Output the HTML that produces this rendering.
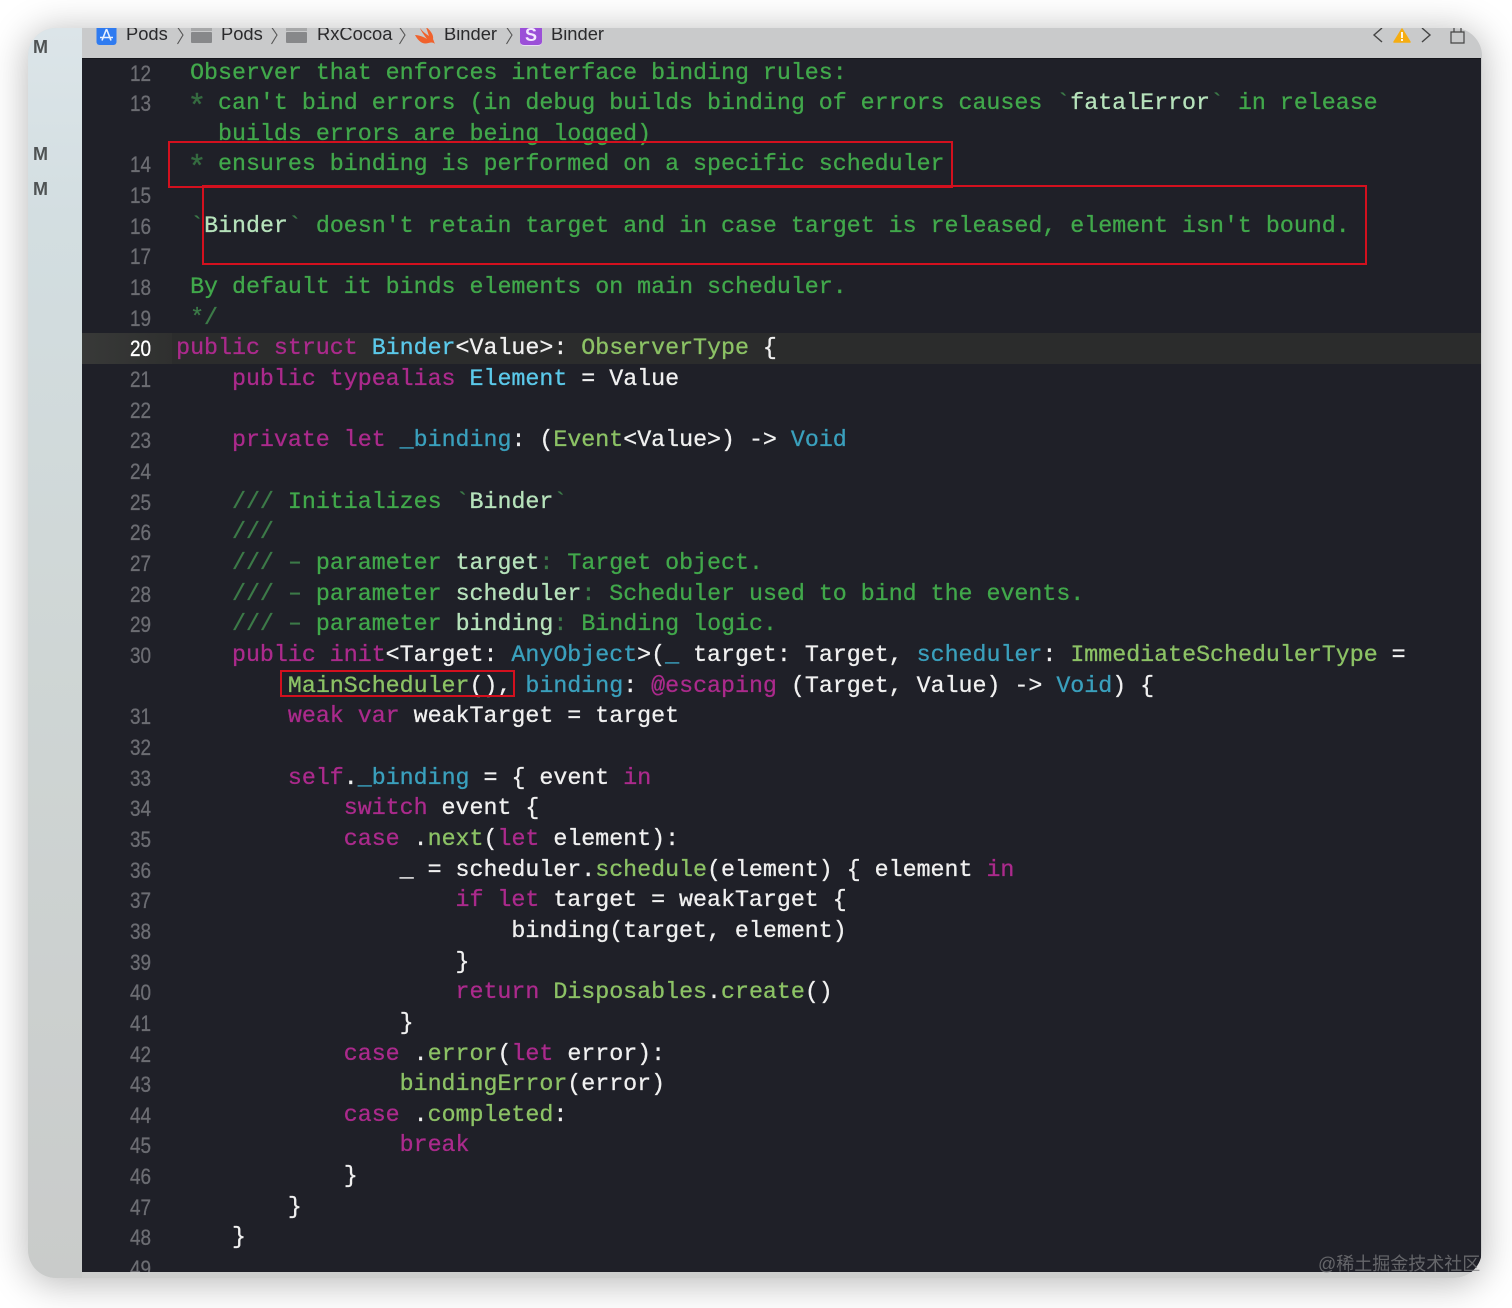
<!DOCTYPE html>
<html><head><meta charset="utf-8"><style>
html,body{margin:0;padding:0;background:#fff;width:1512px;height:1308px;overflow:hidden}
#win{position:absolute;left:28px;top:28px;width:1454px;height:1250px;border-radius:28px;overflow:hidden;background:#cdcecd}
#shadow{position:absolute;left:28px;top:28px;width:1454px;height:1250px;border-radius:28px;box-shadow:0 4px 36px 2px rgba(0,0,0,.27)}
#side{position:absolute;left:0;top:0;width:54px;height:1250px;background:linear-gradient(180deg,#dce5e9 0,#d3dee1 15%,#cfd6d5 50%,#c9cbca 100%)}
#top{position:absolute;left:54px;top:0;width:1400px;height:30px;background:#c9cacb}
#ed{position:absolute;left:54px;top:30px;width:1399px;height:1214px;background:#1f2028;overflow:hidden;border-top:1px solid #15161b;box-sizing:border-box}
#hl{position:absolute;left:0;top:274px;width:1399px;height:31px;background:#2b2c2c}
#hg{position:absolute;left:0;top:274px;width:90px;height:31px;background:linear-gradient(90deg,#383938,#2f302f)}
pre{margin:0;position:absolute;font-family:"Liberation Mono",monospace;font-size:23.29px;line-height:30.66px;color:#f0f0f0;-webkit-text-stroke:.3px currentColor}
#code{left:94.1px;top:-1.5px}
#nums{left:0;top:-.5px;width:69px;text-align:right;font-family:"Liberation Sans",sans-serif;font-size:22px;color:#6c6d73;transform:scaleX(.86);transform-origin:100% 0}
#nums b{font-weight:400;color:#fff}
.g{color:#41a84b}.d{color:#3c7a48}.m{color:#b6e2bb}.k{color:#ab2a8c}.t{color:#5bc9ea}.b{color:#3aa0bd}.n{color:#8cc265}
.s{display:inline-block;width:13.98px;text-align:center;color:#356b40;-webkit-text-stroke:.3px #356b40;transform:translateY(5px) scale(1.35)}
.h{display:inline-block;color:#3c7a48;transform:scaleX(1.5)}
.box{position:absolute;border:2px solid #d3101e;box-sizing:border-box}
.M{position:absolute;font:700 18px "Liberation Sans",sans-serif;color:#4f5354;line-height:20px}
.c{position:absolute;top:24px;font:18.35px/20px "Liberation Sans",sans-serif;color:#2a2a2c}
svg{position:absolute;overflow:visible}
#wm{position:absolute;left:1318px;top:1252px;font:18px/24px "Liberation Sans","Noto Sans CJK SC",sans-serif;color:rgba(125,125,128,.75);white-space:nowrap}
</style></head><body>
<div id="shadow"></div>
<div id="win">
<div id="side"></div>
<div id="top"></div>
<div id="ed">
<div id="hl"></div><div id="hg"></div>
<pre id="nums">12
13

14
15
16
17
18
19
<b>20</b>
21
22
23
24
25
26
27
28
29
30

31
32
33
34
35
36
37
38
39
40
41
42
43
44
45
46
47
48
49</pre>
<pre id="code"> <span class="g">Observer that enforces interface binding rules:</span>
 <span class="s">*</span><span class="g"> can't bind errors (in debug builds binding of errors causes </span><span class="d">`</span><span class="m">fatalError</span><span class="d">`</span><span class="g"> in release</span>
   <span class="g">builds errors are being logged)</span>
 <span class="s">*</span><span class="g"> ensures binding is performed on a specific scheduler</span>

 <span class="d">`</span><span class="m">Binder</span><span class="d">`</span><span class="g"> doesn't retain target and in case target is released, element isn't bound.</span>

 <span class="g">By default it binds elements on main scheduler.</span>
 <span class="d">*/</span>
<span class="k">public struct</span> <span class="t">Binder</span>&lt;Value&gt;: <span class="n">ObserverType</span> {
    <span class="k">public typealias</span> <span class="t">Element</span> = Value

    <span class="k">private let</span> <span class="b">_binding</span>: (<span class="n">Event</span>&lt;Value&gt;) -&gt; <span class="b">Void</span>

    <span class="d">///</span> <span class="g">Initializes </span><span class="d">`</span><span class="m">Binder</span><span class="d">`</span>
    <span class="d">///</span>
    <span class="d">/// </span><span class="h">-</span> <span class="g">parameter </span><span class="m">target</span><span class="d">:</span><span class="g"> Target object.</span>
    <span class="d">/// </span><span class="h">-</span> <span class="g">parameter </span><span class="m">scheduler</span><span class="d">:</span><span class="g"> Scheduler used to bind the events.</span>
    <span class="d">/// </span><span class="h">-</span> <span class="g">parameter </span><span class="m">binding</span><span class="d">:</span><span class="g"> Binding logic.</span>
    <span class="k">public init</span>&lt;Target: <span class="b">AnyObject</span>&gt;(<span class="b">_</span> target: Target, <span class="b">scheduler</span>: <span class="n">ImmediateSchedulerType</span> =
        <span class="n">MainScheduler</span>(), <span class="b">binding</span>: <span class="k">@escaping</span> (Target, Value) -&gt; <span class="b">Void</span>) {
        <span class="k">weak var</span> weakTarget = target

        <span class="k">self</span>.<span class="b">_binding</span> = { event <span class="k">in</span>
            <span class="k">switch</span> event {
            <span class="k">case</span> .<span class="n">next</span>(<span class="k">let</span> element):
                _ = scheduler.<span class="n">schedule</span>(element) { element <span class="k">in</span>
                    <span class="k">if let</span> target = weakTarget {
                        binding(target, element)
                    }
                    <span class="k">return</span> <span class="n">Disposables</span>.<span class="n">create</span>()
                }
            <span class="k">case</span> .<span class="n">error</span>(<span class="k">let</span> error):
                <span class="n">bindingError</span>(error)
            <span class="k">case</span> .<span class="n">completed</span>:
                <span class="k">break</span>
            }
        }
    }</pre>
</div>
<div class="M" style="left:5px;top:9px">M</div>
<div class="M" style="left:5px;top:116px">M</div>
<div class="M" style="left:5px;top:151px">M</div>
</div>

<div style="position:absolute;left:0;top:28px;width:1512px;height:30px;overflow:hidden">
<div style="position:relative;top:-28px;height:58px">
<svg style="left:96px;top:25px" width="21" height="20" viewBox="0 0 21 20"><rect x=".5" y="0" width="20" height="20" rx="3" fill="#2f7bf0"/><path d="M10.5 4L6 15.5M10.5 4L15 15.5M4 12.5H17" stroke="#e8f1ff" stroke-width="1.6" fill="none"/></svg>
<div class="c" style="left:126px">Pods</div>
<svg style="left:176px;top:27px" width="10" height="18" viewBox="0 0 10 18"><path d="M1.5 0L7 8 1.5 17" stroke="#555" stroke-width="1.1" fill="none"/></svg>
<svg style="left:191px;top:28px" width="21" height="15" viewBox="0 0 21 15"><rect x="0" y="0" width="21" height="3" fill="#a7a8a9"/><rect x="0" y="4" width="21" height="11" rx="1" fill="#87888a"/></svg>
<div class="c" style="left:221px">Pods</div>
<svg style="left:270px;top:27px" width="10" height="18" viewBox="0 0 10 18"><path d="M1.5 0L7 8 1.5 17" stroke="#555" stroke-width="1.1" fill="none"/></svg>
<svg style="left:286px;top:28px" width="21" height="15" viewBox="0 0 21 15"><rect x="0" y="0" width="21" height="3" fill="#a7a8a9"/><rect x="0" y="4" width="21" height="11" rx="1" fill="#87888a"/></svg>
<div class="c" style="left:317px">RxCocoa</div>
<svg style="left:398px;top:27px" width="10" height="18" viewBox="0 0 10 18"><path d="M1.5 0L7 8 1.5 17" stroke="#555" stroke-width="1.1" fill="none"/></svg>
<svg style="left:415px;top:27px" width="20" height="18" viewBox="0 0 20 18"><path d="M0 8C4 8 9 10 12 12 9 8 6 4 5 1 8 5 11 7 14 9 13 6 12 3 11 0 15 3 19 8 18 12 19 14 19 15 20 17 17 14 14 16.500 10 16.500 6 16.500 2 12 0 8Z" fill="#f0622d"/></svg>
<div class="c" style="left:444px">Binder</div>
<svg style="left:505px;top:27px" width="10" height="18" viewBox="0 0 10 18"><path d="M1.5 0L7 8 1.5 17" stroke="#555" stroke-width="1.1" fill="none"/></svg>
<div style="position:absolute;left:520px;top:25px;width:22px;height:21px;border-radius:4px;background:#9b4fd8;border-bottom:1px solid #e9dcf5;box-sizing:border-box;color:#f3e8ff;font:700 18px/20px 'Liberation Sans',sans-serif;text-align:center">S</div>
<div class="c" style="left:551px">Binder</div>
<svg style="left:1372px;top:27px" width="12" height="18" viewBox="0 0 12 18"><path d="M10 1L2 8 10 15" stroke="#444" stroke-width="1.4" fill="none"/></svg>
<svg style="left:1393px;top:28px" width="18" height="17" viewBox="0 0 18 17"><path d="M9 1L17 14H1Z" fill="#f5ad12" stroke="#f5ad12" stroke-linejoin="round" stroke-width="1.5"/><rect x="8.100" y="4" width="1.8" height="6" fill="#fff"/><rect x="8.100" y="11" width="1.8" height="2" fill="#fff"/></svg>
<svg style="left:1420px;top:27px" width="12" height="18" viewBox="0 0 12 18"><path d="M2 1L10 8 2 15" stroke="#444" stroke-width="1.4" fill="none"/></svg>
<svg style="left:1450px;top:27px" width="15" height="18" viewBox="0 0 15 18"><path d="M1 5H14V16H1ZM4 5V0M11 5V0" stroke="#444" stroke-width="1.2" fill="none"/></svg>
</div></div>

<div class="box" style="left:168px;top:141px;width:785px;height:47px"></div>
<div class="box" style="left:202px;top:185px;width:1165px;height:80px"></div>
<div class="box" style="left:280px;top:670px;width:235px;height:27px"></div>
<div id="wm">@稀土掘金技术社区</div>
</body></html>
